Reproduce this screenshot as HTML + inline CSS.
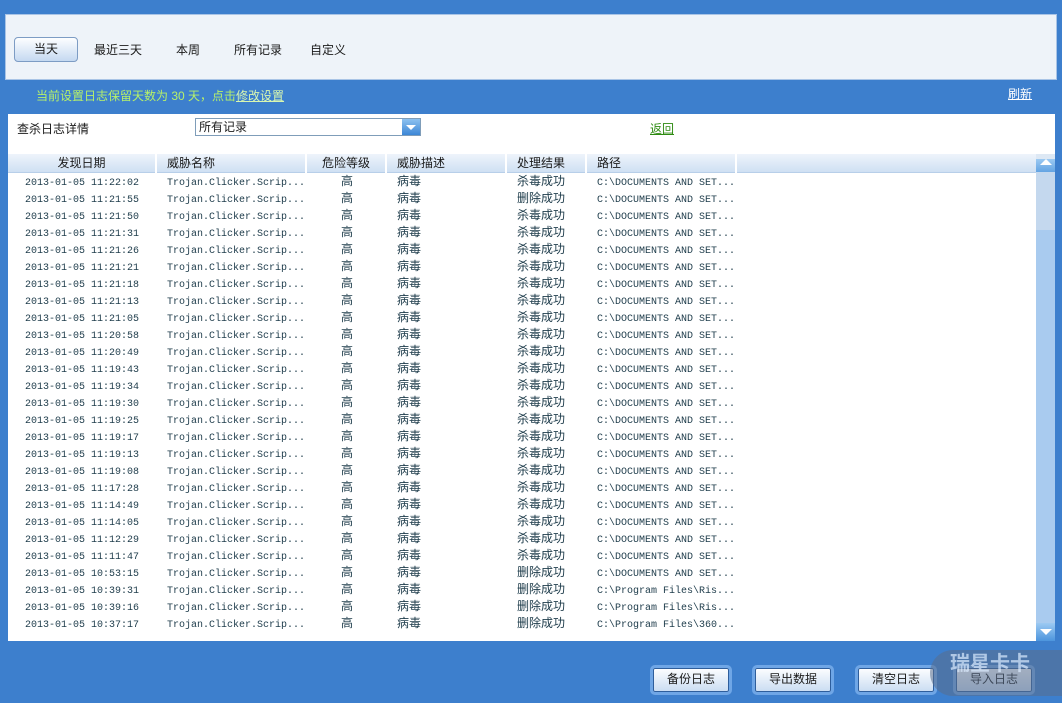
<!DOCTYPE html>
<html><head><meta charset="utf-8"><style>
*{margin:0;padding:0;box-sizing:border-box}
body{width:1062px;height:703px;background:#3d7fcd;position:relative;overflow:hidden;font-family:"Liberation Sans","Noto Sans CJK SC",sans-serif;font-size:12px;color:#1a1a1a}
.top{position:absolute;left:5px;top:14px;width:1052px;height:66px;background:#eef3f9;border:1px solid #a9c4e6}
.tab{position:absolute;top:36px;font-size:12px}
.sel{left:14px;top:37px;width:64px;height:25px;border:1px solid #7d9cc4;border-radius:4px;background:linear-gradient(#fdfeff,#c5d9f1);text-align:center;line-height:23px}
.note{position:absolute;left:36px;top:87px;color:#b6f06a;font-size:12px}
.note u{color:#d9f7b0}
.refresh{position:absolute;left:1008px;top:85px;color:#fff;text-decoration:underline}
.panel{position:absolute;left:8px;top:114px;width:1047px;height:527px;background:#fff}
.hdr{position:absolute;left:0;top:40px;width:1028px;height:19px;background:linear-gradient(#eef4fb,#cfe0f3);border-bottom:1px solid #b8cfe9}
.hdr span{position:absolute;top:0;height:19px;line-height:19px;border-right:2px solid #fff;font-size:12px}
.row{position:absolute;left:0;height:17px;line-height:17px;font-family:"Liberation Mono","Noto Sans CJK SC",monospace;font-size:10px;color:#1d3b4a;white-space:nowrap}
.row span{position:absolute;top:2px;line-height:17px}
.row span.cj{top:0;font-family:"Liberation Sans","Noto Sans CJK SC",sans-serif;font-size:12px}
.sb{position:absolute;left:1028px;top:40px;width:19px;height:487px;background:#dde8f4}
.btn{position:absolute;top:665px;width:82px;height:30px;border:3px solid #6fa6e6;border-radius:5px;background:linear-gradient(#fdfeff,#c9dcf2);text-align:center;line-height:23px;font-size:12px;box-shadow:0 0 0 1px #2e5e9c inset}
</style></head><body>
<div class="top"></div>
<div class="tab sel" style="position:absolute">当天</div>
<div class="tab" style="left:94px;top:41px">最近三天</div>
<div class="tab" style="left:176px;top:41px">本周</div>
<div class="tab" style="left:234px;top:41px">所有记录</div>
<div class="tab" style="left:310px;top:41px">自定义</div>
<div class="note">当前设置日志保留天数为 30 天，点击<u>修改设置</u></div>
<div class="refresh">刷新</div>
<div class="panel">
<div style="position:absolute;left:9px;top:6px">查杀日志详情</div>
<div style="position:absolute;left:187px;top:4px;width:226px;height:18px;border:1px solid #7f9db9;background:#fff;padding-left:3px;line-height:16px">所有记录<div style="position:absolute;right:0;top:0;width:18px;height:16px;background:linear-gradient(#8ec2f0,#3c86d6)"><div style="margin:6px auto 0;width:0;height:0;border-left:5px solid transparent;border-right:5px solid transparent;border-top:5px solid #fff"></div></div></div>
<div style="position:absolute;left:642px;top:6px;color:#2e8b12;text-decoration:underline">返回</div>
<div class="hdr">
<span style="left:0;width:149px;text-align:center">发现日期</span>
<span style="left:149px;width:150px;padding-left:10px">威胁名称</span>
<span style="left:299px;width:80px;text-align:center">危险等级</span>
<span style="left:379px;width:120px;padding-left:10px">威胁描述</span>
<span style="left:499px;width:80px;padding-left:10px">处理结果</span>
<span style="left:579px;width:150px;padding-left:10px">路径</span>
</div>
<div class="sb"><div style="height:18px;background:linear-gradient(#9cc9f2,#4d95dd);"><div style="margin:5px auto 0;width:0;height:0;border-left:6px solid transparent;border-right:6px solid transparent;border-bottom:6px solid #fff"></div></div>
<div style="position:absolute;top:18px;width:19px;height:58px;background:#c4d8ee"></div>
<div style="position:absolute;top:76px;width:19px;height:393px;background:#a9cbef"></div>
<div style="position:absolute;bottom:0;width:19px;height:18px;background:linear-gradient(#9cc9f2,#4d95dd)"><div style="margin:6px auto 0;width:0;height:0;border-left:6px solid transparent;border-right:6px solid transparent;border-top:6px solid #fff"></div></div></div>
<div id="rows"></div>
</div>
<div class="btn" style="left:650px">备份日志</div>
<div class="btn" style="left:752px">导出数据</div>
<div class="btn" style="left:855px">清空日志</div>
<div class="btn" style="left:953px">导入日志</div>
<div style="position:absolute;left:930px;top:650px;width:132px;height:46px;border-radius:23px 0 0 23px;background:rgba(90,110,140,.55);color:rgba(220,235,255,.7);font-size:20px;font-weight:bold;padding-left:20px;line-height:28px">瑞星卡卡</div>
<script>
var t=["11:22:02","11:21:55","11:21:50","11:21:31","11:21:26","11:21:21","11:21:18","11:21:13","11:21:05","11:20:58","11:20:49","11:19:43","11:19:34","11:19:30","11:19:25","11:19:17","11:19:13","11:19:08","11:17:28","11:14:49","11:14:05","11:12:29","11:11:47","10:53:15","10:39:31","10:39:16","10:37:17"];
var del=[1,23,24,25,26];var h="";
for(var i=0;i<t.length;i++){var r=del.indexOf(i)>=0?"删除成功":"杀毒成功";
var p=i<24?"C:\\DOCUMENTS AND SET...":(i<26?"C:\\Program Files\\Ris...":"C:\\Program Files\\360...");
h+='<div class="row" style="top:'+(59+i*17)+'px"><span style="left:17px">2013-01-05 '+t[i]+'</span><span style="left:159px">Trojan.Clicker.Scrip...</span><span class="cj" style="left:333px">高</span><span class="cj" style="left:389px">病毒</span><span class="cj" style="left:509px">'+r+'</span><span style="left:589px">'+p+'</span></div>';}
document.getElementById("rows").innerHTML=h;
</script>
</body></html>
